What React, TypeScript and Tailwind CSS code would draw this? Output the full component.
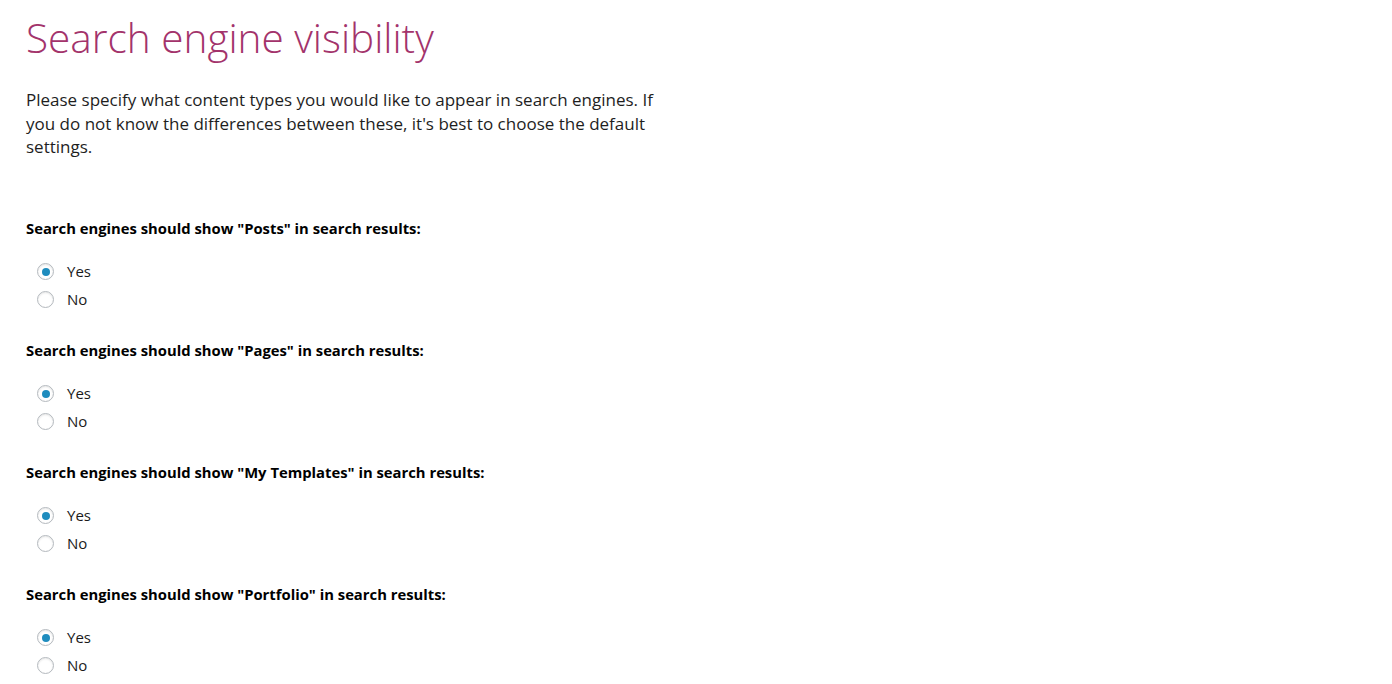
const groups = ["Posts", "Pages", "My Templates", "Portfolio"]

function Radio({ checked, label }: { checked: boolean; label: string }) {
  return (
    <label className="flex items-center h-[28px] pl-[11px]">
      <span className="w-[17px] h-[17px] rounded-full border border-[#b4b9be] bg-white shadow-[inset_0_1px_2px_rgba(0,0,0,0.1)] flex items-center justify-center">
        {checked && <span className="w-[8px] h-[8px] rounded-full bg-[#1e8cbe]" />}
      </span>
      <span className="ml-[13px] text-[15px] text-[#1a1a1a]">{label}</span>
    </label>
  )
}

export default function App() {
  return (
    <div className="min-h-screen bg-white pl-[26px] pt-[12px] font-['Open_Sans',sans-serif]">
      <h1 className="text-[40.5px] leading-[52px] font-light text-[#a3336b]">Search engine visibility</h1>
      <p className="mt-[24px] w-[640px] text-[17px] leading-[23.5px] text-[#1e1e1e]">
        Please specify what content types you would like to appear in search engines. If you do not know the differences between these, it's best to choose the default settings.
      </p>
      <div className="mt-[59px] flex flex-col gap-[26px]">
        {groups.map((g) => (
          <div key={g}>
            <div className="text-[14.8px] leading-[20px] font-bold text-black">
              Search engines should show "{g}" in search results:
            </div>
            <div className="mt-[20px] flex flex-col">
              <Radio checked label="Yes" />
              <Radio checked={false} label="No" />
            </div>
          </div>
        ))}
      </div>
    </div>
  )
}
